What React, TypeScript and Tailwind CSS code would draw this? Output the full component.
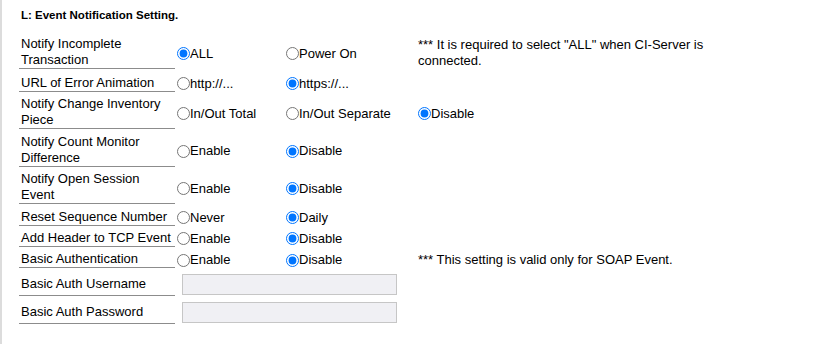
import React from "react";

type Opt = { label: string; checked?: boolean };
type Row = {
  label: string[];
  opts?: Opt[];
  note?: string[];
  input?: boolean;
  rowCls: string;
  radioCls: string;
};

const rows: Row[] = [
  {
    label: ["Notify Incomplete", "Transaction"],
    opts: [{ label: "ALL", checked: true }, { label: "Power On" }],
    note: ['*** It is required to select "ALL" when CI-Server is', "connected."],
    rowCls: "mt-0 h-[33px]",
    radioCls: "pt-[2px]",
  },
  {
    label: ["URL of Error Animation"],
    opts: [{ label: "http://..." }, { label: "https://...", checked: true }],
    rowCls: "mt-[6px] h-[17px]",
    radioCls: "pt-0",
  },
  {
    label: ["Notify Change Inventory", "Piece"],
    opts: [{ label: "In/Out Total" }, { label: "In/Out Separate" }, { label: "Disable", checked: true }],
    rowCls: "mt-[4px] h-[33px]",
    radioCls: "pt-[2px]",
  },
  {
    label: ["Notify Count Monitor", "Difference"],
    opts: [{ label: "Enable" }, { label: "Disable", checked: true }],
    rowCls: "mt-[4px] h-[34px]",
    radioCls: "pt-[2px]",
  },
  {
    label: ["Notify Open Session", "Event"],
    opts: [{ label: "Enable" }, { label: "Disable", checked: true }],
    rowCls: "mt-[4px] h-[33px]",
    radioCls: "pt-[2px]",
  },
  {
    label: ["Reset Sequence Number"],
    opts: [{ label: "Never" }, { label: "Daily", checked: true }],
    rowCls: "mt-[5px] h-[17px]",
    radioCls: "pt-0",
  },
  {
    label: ["Add Header to TCP Event"],
    opts: [{ label: "Enable" }, { label: "Disable", checked: true }],
    rowCls: "mt-[4px] h-[17px]",
    radioCls: "pt-0",
  },
  {
    label: ["Basic Authentication"],
    opts: [{ label: "Enable" }, { label: "Disable", checked: true }],
    note: ["*** This setting is valid only for SOAP Event."],
    rowCls: "mt-[4px] h-[17px]",
    radioCls: "pt-[1px]",
  },
  {
    label: ["Basic Auth Username"],
    input: true,
    rowCls: "mt-[3px] h-[25px]",
    radioCls: "pt-[2px]",
  },
  {
    label: ["Basic Auth Password"],
    input: true,
    rowCls: "mt-[3px] h-[25px]",
    radioCls: "pt-[2px]",
  },
];

function Radio({ opt, name }: { opt: Opt; name: string }) {
  return (
    <label className="flex items-center leading-[16px] whitespace-nowrap">
      <input
        type="radio"
        name={name}
        defaultChecked={!!opt.checked}
        className="m-0 w-[13px] h-[13px] shrink-0"
      />
      <span>{opt.label}</span>
    </label>
  );
}

export default function App() {
  return (
    <div
      className="w-[819px] h-[344px] bg-white text-black border-l-2 border-[#dcdcdc] overflow-hidden"
      style={{ fontFamily: '"Liberation Sans", Arial, sans-serif' }}
    >
      <div className="pl-[17px]">
        <div className="pt-[8px] pl-[2px] h-[22px] text-[11.5px] leading-[14px] font-bold">
          L: Event Notification Setting.
        </div>
        <div className="mt-[14px] flex flex-col text-[13px]">
          {rows.map((r, i) => (
            <div key={i} className={`flex items-stretch shrink-0 ${r.rowCls}`}>
              <div
                className={`w-[156px] shrink-0 border-b border-[#8c8c8c] pl-[2px] leading-[16px] flex flex-col justify-center ${
                  r.input ? r.radioCls : ""
                }`}
              >
                {r.label.map((l, j) => (
                  <div key={j}>{l}</div>
                ))}
              </div>
              <div className="w-[2px] shrink-0" />
              {r.input ? (
                <div className="flex items-end pl-[5px] pb-[1px]">
                  <input
                    type="text"
                    disabled
                    className="w-[215px] h-[21px] bg-[#f0f0f4] border border-[#c6c6c6] outline-none"
                  />
                </div>
              ) : (
                <div className="flex items-stretch">
                  <div className={`w-[109px] shrink-0 flex items-center ${r.radioCls}`}>
                    <Radio opt={r.opts![0]} name={`r${i}`} />
                  </div>
                  <div className={`w-[132px] shrink-0 flex items-center ${r.radioCls}`}>
                    <Radio opt={r.opts![1]} name={`r${i}`} />
                  </div>
                  {r.opts![2] ? (
                    <div className={`flex items-center ${r.radioCls}`}>
                      <Radio opt={r.opts![2]} name={`r${i}`} />
                    </div>
                  ) : r.note ? (
                    <div className={`flex flex-col justify-center leading-[16px] whitespace-nowrap ${r.note.length === 1 ? "pt-[1px]" : "pt-0"}`}>
                      {r.note.map((n, j) => (
                        <div key={j}>{n}</div>
                      ))}
                    </div>
                  ) : null}
                </div>
              )}
            </div>
          ))}
        </div>
      </div>
    </div>
  );
}
